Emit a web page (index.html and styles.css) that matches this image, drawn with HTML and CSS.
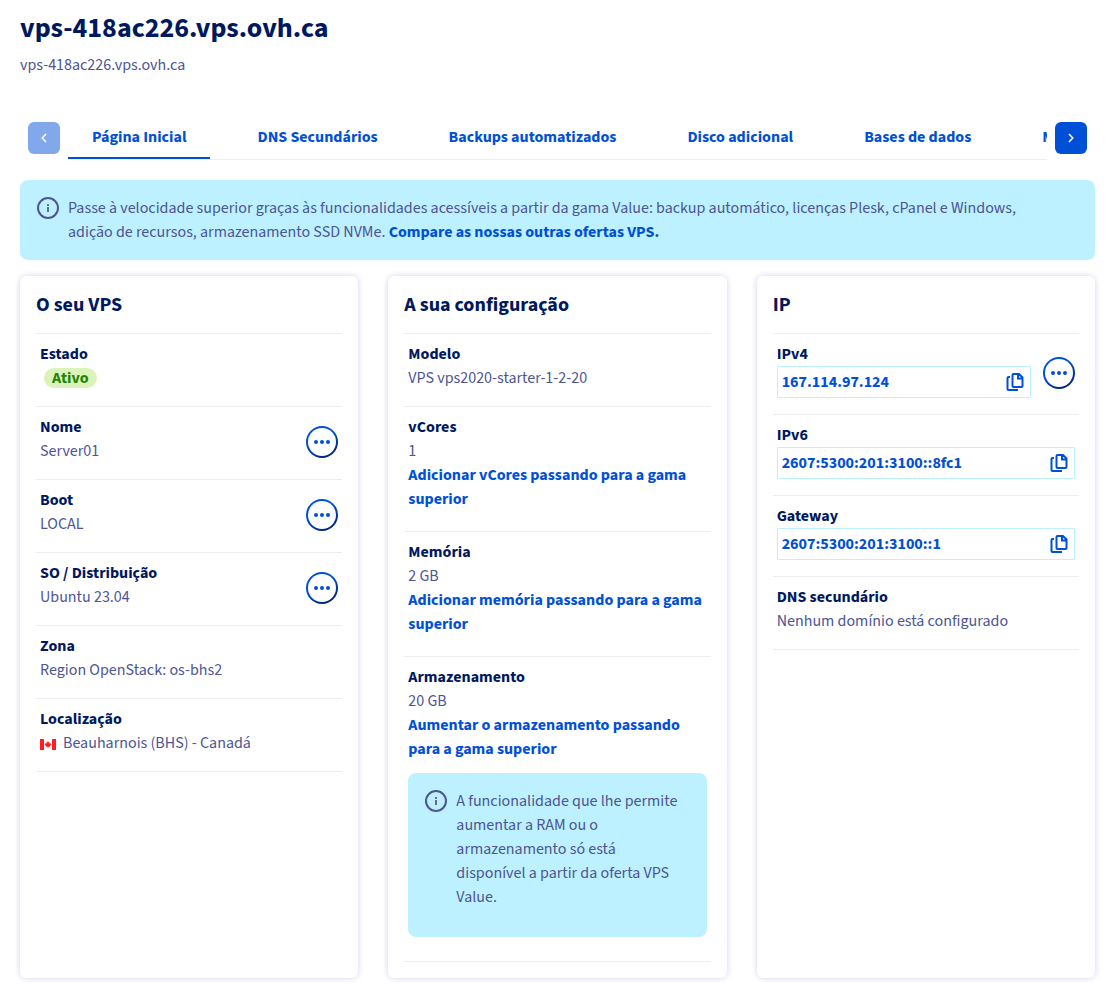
FILE: index.html
```html
<!DOCTYPE html>
<html lang="pt">
<head>
<meta charset="utf-8">
<meta name="viewport" content="width=device-width, initial-scale=1">
<title>vps-418ac226.vps.ovh.ca</title>
<link rel="stylesheet" href="styles.css">
</head>
<body>
<svg class="sprite" aria-hidden="true">
  <symbol id="info" viewBox="0 0 24 24">
    <circle cx="12" cy="12" r="10" fill="none" stroke="currentColor" stroke-width="2"/>
    <path d="M11 8h2v2h-2zM11 11h2v5h-2z" fill="currentColor" opacity=".85"/>
  </symbol>
  <symbol id="copy" viewBox="0 0 18 18">
    <path d="M7.500 1h5.500l3.500 3.500v8.500a1 1 0 0 1-1 1h-8a1 1 0 0 1-1-1V2a1 1 0 0 1 1-1zM12 1.500v4h4M4 4H2.500a1 1 0 0 0-1 1v11a1 1 0 0 0 1 1H12" fill="none" stroke="currentColor" stroke-width="2"/>
  </symbol>
  <symbol id="dots" viewBox="0 0 16 4">
    <circle cx="2" cy="2" r="2" fill="currentColor"/><circle cx="8" cy="2" r="2" fill="currentColor"/><circle cx="14" cy="2" r="2" fill="currentColor"/>
  </symbol>
</svg>

<header class="page-header">
  <h1 class="title">vps-418ac226.vps.ovh.ca</h1>
  <p class="subtitle">vps-418ac226.vps.ovh.ca</p>
</header>

<nav class="tabs">
  <button class="scroll" type="button" disabled aria-label="Anterior"><svg width="6" height="10" viewBox="0 0 6 10"><path d="M5 1L1.200 5 5 9" fill="none" stroke="currentColor" stroke-width="1.500"/></svg></button>
  <div class="tab-list">
    <a class="tab active" href="#">Página Inicial</a>
    <a class="tab" href="#">DNS Secundários</a>
    <a class="tab" href="#">Backups automatizados</a>
    <a class="tab" href="#">Disco adicional</a>
    <a class="tab" href="#">Bases de dados</a>
    <a class="tab" href="#">Monitorização</a>
  </div>
  <button class="scroll" type="button" aria-label="Seguinte"><svg width="6" height="10" viewBox="0 0 6 10"><path d="M1 1l3.800 4L1 9" fill="none" stroke="currentColor" stroke-width="1.500"/></svg></button>
</nav>

<main>
  <div class="alert">
    <svg class="alert-icon"><use href="#info"/></svg>
    <p>Passe à velocidade superior graças às funcionalidades acessíveis a partir da gama Value: backup automático, licenças Plesk, cPanel e Windows, adição de recursos, armazenamento SSD NVMe. <a class="link" href="#">Compare as nossas outras ofertas VPS.</a></p>
  </div>

  <div class="cards">
    <section class="card">
      <h2 class="card-title">O seu VPS</h2>
      <dl class="rows">
        <div class="row"><div class="info"><dt>Estado</dt><dd><span class="badge">Ativo</span></dd></div></div>
        <div class="row"><div class="info"><dt>Nome</dt><dd>Server01</dd></div><button class="menu" type="button" aria-label="Ações do nome"><svg><use href="#dots"/></svg></button></div>
        <div class="row"><div class="info"><dt>Boot</dt><dd>LOCAL</dd></div><button class="menu" type="button" aria-label="Ações de boot"><svg><use href="#dots"/></svg></button></div>
        <div class="row"><div class="info"><dt>SO / Distribuição</dt><dd>Ubuntu 23.04</dd></div><button class="menu" type="button" aria-label="Ações do SO"><svg><use href="#dots"/></svg></button></div>
        <div class="row"><div class="info"><dt>Zona</dt><dd>Region OpenStack: os-bhs2</dd></div></div>
        <div class="row"><div class="info"><dt>Localização</dt><dd class="place"><svg class="flag" viewBox="0 0 16 11" aria-hidden="true"><path d="M0 0h16v11H0z" fill="#fff"/><path d="M0 0h4v11H0zM12 0h4v11h-4zM8 2l.8 1.400.9-.4-.3 1.700 1.600-.6-.3 1 .7.5-1.800 1.600.1.7-1.400-.2V9h-.6V7.700l-1.400.2.1-.7L4.600 5.600l.7-.5-.3-1 1.600.6L6.300 3l.9.4z" fill="#ff1f1f"/></svg>Beauharnois (BHS) - Canadá</dd></div></div>
      </dl>
    </section>

    <section class="card">
      <h2 class="card-title">A sua configuração</h2>
      <dl class="rows">
        <div class="row"><div class="info"><dt>Modelo</dt><dd>VPS vps2020-starter-1-2-20</dd></div></div>
        <div class="row"><div class="info"><dt>vCores</dt><dd>1</dd><dd class="upgrade"><a class="link" href="#">Adicionar vCores passando para a gama superior</a></dd></div></div>
        <div class="row"><div class="info"><dt>Memória</dt><dd>2 GB</dd><dd class="upgrade"><a class="link" href="#">Adicionar memória passando para a gama superior</a></dd></div></div>
        <div class="row"><div class="info"><dt>Armazenamento</dt><dd>20 GB</dd><dd class="upgrade"><a class="link" href="#">Aumentar o armazenamento passando para a gama superior</a></dd>
          <dd class="alert alert-small">
            <svg class="alert-icon"><use href="#info"/></svg>
            <p>A funcionalidade que lhe permite aumentar a RAM ou o armazenamento só está disponível a partir da oferta VPS Value.</p>
          </dd></div></div>
      </dl>
    </section>

    <section class="card">
      <h2 class="card-title">IP</h2>
      <div class="rows">
        <div class="row"><div class="info"><label for="ipv4">IPv4</label><div class="clipboard"><input id="ipv4" type="text" readonly value="167.114.97.124"><button type="button" aria-label="Copiar IPv4"><svg><use href="#copy"/></svg></button></div></div><button class="menu" type="button" aria-label="Ações de IPv4"><svg><use href="#dots"/></svg></button></div>
        <div class="row"><div class="info"><label for="ipv6">IPv6</label><div class="clipboard"><input id="ipv6" type="text" readonly value="2607:5300:201:3100::8fc1"><button type="button" aria-label="Copiar IPv6"><svg><use href="#copy"/></svg></button></div></div></div>
        <div class="row"><div class="info"><label for="gateway">Gateway</label><div class="clipboard"><input id="gateway" type="text" readonly value="2607:5300:201:3100::1"><button type="button" aria-label="Copiar gateway"><svg><use href="#copy"/></svg></button></div></div></div>
        <dl class="row"><div class="info"><dt>DNS secundário</dt><dd>Nenhum domínio está configurado</dd></div></dl>
      </div>
    </section>
  </div>
</main>
</body>
</html>
```
FILE: styles.css
```css
* {
  box-sizing: border-box;
}

body {
  margin: 0;
  padding: 8px 15px 11px 20px;
  background: #fff;
  color: #4d5592;
  font-family: "Source Sans Pro", "Source Sans 3", "Noto Sans CJK SC", sans-serif;
  font-size: 16px;
  line-height: 24px;
}

h1, h2, p, dl, dd {
  margin: 0;
}

button, input {
  font: inherit;
}

button {
  padding: 0;
  cursor: pointer;
}

.sprite {
  position: absolute;
  width: 0;
  height: 0;
}

.title {
  color: #00185e;
  font-size: 28px;
  line-height: 40px;
}

.subtitle {
  margin-top: 5px;
}

.tabs {
  display: flex;
  gap: 8px;
  padding: 0 8px;
  margin: 37px 0 20px;
}

.scroll {
  display: flex;
  flex: none;
  align-items: center;
  justify-content: center;
  width: 32px;
  height: 32px;
  margin-top: 8px;
  border: 0;
  border-radius: 6px;
  background: #0050d7;
  color: #fff;
}

.scroll:disabled {
  background: #80a8eb;
}

.tab-list {
  display: flex;
  flex: 1;
  gap: 23px;
  min-width: 0;
  overflow: hidden;
  border-bottom: 1px solid #e4f0fa;
}

.tab {
  flex: none;
  height: 45px;
  padding: 11px 24px 8px;
  border-bottom: 2px solid transparent;
  color: #0050d7;
  font-weight: 700;
  text-decoration: none;
}

.tab.active {
  border-color: #0050d7;
}

.link {
  color: #0050d7;
  font-weight: 700;
  text-decoration: none;
}

.alert {
  display: flex;
  gap: 8px;
  padding: 16px 40px 16px 16px;
  border-radius: 8px;
  background: #bef1ff;
}

.alert-icon {
  flex: none;
  width: 24px;
  height: 24px;
}

.alert-small {
  margin: 12px 0 8px;
  padding: 16px 24px 28px 16px;
}

.cards {
  display: grid;
  grid-template-columns: repeat(3, minmax(0, 1fr));
  gap: 30px;
  margin-top: 16px;
}

.card {
  padding: 16px;
  border-radius: 6px;
  box-shadow: 0 0 6px rgba(0, 0, 160, 0.18);
}

.card-title {
  padding: 1px 0 16px;
  border-bottom: 1px solid #eee;
  color: #00185e;
  font-size: 20px;
  line-height: 24px;
}

.row {
  display: flex;
  gap: 12px;
  align-items: center;
  padding: 8px 4px 16px;
  border-bottom: 1px solid #eee;
}

.info {
  flex: 1;
  min-width: 0;
}

dt, label {
  display: block;
  color: #00185e;
  font-weight: 700;
}

.upgrade {
  margin-bottom: 4px;
}

.badge {
  display: block;
  width: fit-content;
  margin: 2px 4px;
  padding: 0 8px;
  border-radius: 10px;
  background: #daf3bb;
  color: #268403;
  font-weight: 700;
  line-height: 20px;
}

.menu {
  display: flex;
  flex: none;
  align-items: center;
  justify-content: center;
  width: 32px;
  height: 32px;
  margin-top: 6px;
  border: 2px solid transparent;
  border-radius: 50%;
  background: linear-gradient(#fff, #fff) padding-box, linear-gradient(150deg, #0050d7 40%, #00185e) border-box;
  color: #0050d7;
}

.menu svg {
  width: 16px;
  height: 4px;
}

.place {
  display: flex;
  gap: 7px;
  align-items: center;
}

.flag {
  width: 16px;
  height: 11px;
  margin-top: 3px;
}

.clipboard {
  display: flex;
  align-items: center;
  height: 32px;
  padding: 0 6px 0 4px;
  border: 1px solid #bef1ff;
  border-radius: 1px;
}

.clipboard input {
  flex: 1;
  min-width: 0;
  padding: 0;
  border: 0;
  outline: 0;
  background: none;
  color: #0050d7;
  font-weight: 700;
}

.clipboard button {
  display: flex;
  border: 0;
  background: none;
  color: #0050d7;
}

.clipboard svg {
  width: 18px;
  height: 18px;
}

@media (max-width: 800px) {
  .cards {
    grid-template-columns: minmax(0, 1fr);
  }
}
```
